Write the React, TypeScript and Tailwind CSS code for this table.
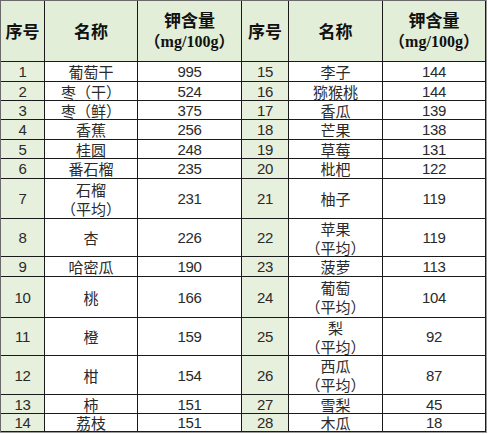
import React from "react";

type Row = [string, string[], string];

const left: Row[] = [
  ["1", ["葡萄干"], "995"],
  ["2", ["枣（干）"], "524"],
  ["3", ["枣（鲜）"], "375"],
  ["4", ["香蕉"], "256"],
  ["5", ["桂圆"], "248"],
  ["6", ["番石榴"], "235"],
  ["7", ["石榴", "（平均）"], "231"],
  ["8", ["杏"], "226"],
  ["9", ["哈密瓜"], "190"],
  ["10", ["桃"], "166"],
  ["11", ["橙"], "159"],
  ["12", ["柑"], "154"],
  ["13", ["柿"], "151"],
  ["14", ["荔枝"], "151"],
];

const right: Row[] = [
  ["15", ["李子"], "144"],
  ["16", ["猕猴桃"], "144"],
  ["17", ["香瓜"], "139"],
  ["18", ["芒果"], "138"],
  ["19", ["草莓"], "131"],
  ["20", ["枇杷"], "122"],
  ["21", ["柚子"], "119"],
  ["22", ["苹果", "（平均）"], "119"],
  ["23", ["菠萝"], "113"],
  ["24", ["葡萄", "（平均）"], "104"],
  ["25", ["梨", "（平均）"], "92"],
  ["26", ["西瓜", "（平均）"], "87"],
  ["27", ["雪梨"], "45"],
  ["28", ["木瓜"], "18"],
];

const cell =
  "border-r border-b border-[#1a1a1a] flex flex-col items-center justify-center";
const num =
  "font-['Liberation_Sans',sans-serif] text-[15px] leading-none text-[#2a2a2a] tracking-[-0.3px]";
const cjkOne =
  "font-['Noto_Sans_CJK_SC',sans-serif] text-[15px] leading-[17px] text-[#2a2a2a] whitespace-nowrap";
const cjkTwo =
  "font-['Noto_Sans_CJK_SC',sans-serif] text-[15px] leading-[19px] text-[#2a2a2a] whitespace-nowrap";

function Header() {
  return (
    <>
      <div className={`${cell} bg-[#e3eed8]`}>
        <span className="font-['Noto_Sans_CJK_SC',sans-serif] font-bold text-[17px] text-[#111]">序号</span>
      </div>
      <div className={`${cell} bg-[#e3eed8]`}>
        <span className="font-['Noto_Sans_CJK_SC',sans-serif] font-bold text-[17px] text-[#111]">名称</span>
      </div>
      <div className={`${cell} bg-[#e3eed8] pb-[2px]`}>
        <span className="font-['Noto_Sans_CJK_SC',sans-serif] font-bold text-[17px] leading-[21px] text-[#111]">钾含量</span>
        <span className="font-['Noto_Sans_CJK_SC',sans-serif] font-bold text-[16px] leading-[21px] text-[#111] whitespace-nowrap">
          （<span className="font-['Liberation_Serif',serif] text-[16px]">mg/100g</span>）
        </span>
      </div>
    </>
  );
}

function Cells({ r }: { r: Row }) {
  const two = r[1].length > 1;
  return (
    <>
      <div className={`${cell} bg-[#e7f0dd]`}>
        <span className={num}>{r[0]}</span>
      </div>
      <div className={`${cell} bg-white`}>
        {r[1].map((t, i) => (
          <span key={i} className={two ? cjkTwo : cjkOne}>
            {t}
          </span>
        ))}
      </div>
      <div className={`${cell} bg-white`}>
        <span className={num}>{r[2]}</span>
      </div>
    </>
  );
}

export default function App() {
  return (
    <div className="w-[488px] h-[434px] bg-white">
      <div className="w-[487px] h-[433px] border-r border-b border-[#9a9a9a]">
        <div className="grid grid-cols-[44px_93px_104px_47px_94px_103px] grid-rows-[61px_20px_19px_19px_20px_19px_20px_40px_38px_20px_41px_38px_39px_19px_18px] border-l border-t border-[#6a6a6a] w-[486px]">
          <Header />
          <Header />
          {left.map((r, i) => (
            <React.Fragment key={i}>
              <Cells r={r} />
              <Cells r={right[i]} />
            </React.Fragment>
          ))}
        </div>
      </div>
    </div>
  );
}
